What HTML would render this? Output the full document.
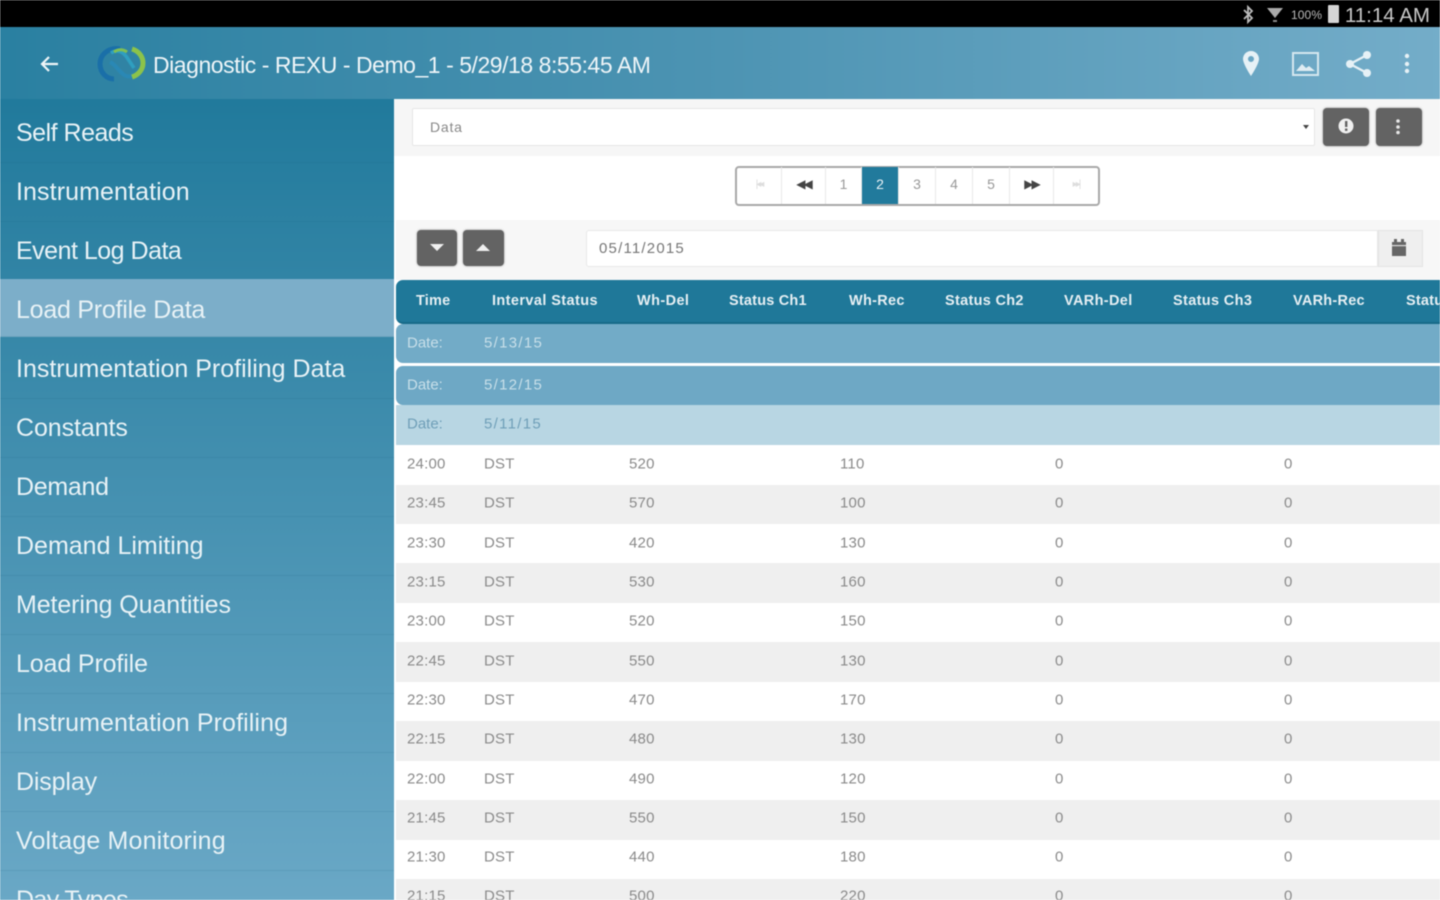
<!DOCTYPE html>
<html><head><meta charset="utf-8"><style>
*{box-sizing:border-box}
html,body{margin:0;padding:0;width:1440px;height:900px;overflow:hidden;background:#fff;font-family:"Liberation Sans",sans-serif}
#root{position:relative;width:1440px;height:900px;overflow:hidden;filter:blur(.5px)}
.a{position:absolute;white-space:nowrap}
#bar{left:0;top:0;width:1440px;height:27px;background:#000}
#hd{left:0;top:27px;width:1440px;height:72px;background:linear-gradient(90deg,#2a80a1,#4d94b3 50%,#74adc9);box-shadow:0 1px 2px rgba(0,0,0,.25)}
#side{left:0;top:99px;width:394px;height:801px;background:linear-gradient(180deg,#217a9c,#6aa8c6)}
.m{left:0;width:394px;height:59px;line-height:59px;padding-left:16px;color:#e8f2f6;font-size:25px;border-bottom:1px solid rgba(20,90,120,.13)}
.m.s{background:#7caec9;color:#e8f2f6}
.t{font-size:15px;color:#8a8a8a;letter-spacing:.2px;transform:translateY(-50%)}
.th{top:301px;transform:translateY(-50%);font-size:14.5px;font-weight:bold;color:#e6eff3;letter-spacing:.2px}
.pg{top:167px;height:37px;width:37px;text-align:center;line-height:35px;font-size:14px;color:#999;border-right:1px solid #e8e8e8}
.ic{font-size:10px;letter-spacing:-2px}
.btn{background:#636363;border-radius:4px;box-shadow:0 0 2px rgba(0,0,0,.4)}
.d{font-size:15px;transform:translateY(-50%)}
.v{letter-spacing:1.3px}
</style></head><body><div id="root">
<div class="a" id="bar"></div>
<div class="a" style="right:10px;top:4px;font-size:20.5px;color:#c8c8c8">11:14 AM</div>
<div class="a" style="left:1291px;top:8px;font-size:12px;letter-spacing:.1px;color:#bbb">100%</div>
<div class="a" style="left:1328px;top:5px;width:11px;height:18px;background:#d5d5d5;border-radius:1px"></div>
<svg class="a" style="left:1240px;top:5px" width="50" height="19" viewBox="0 0 50 19"><path d="M4 5l8 8-4 4V2l4 4-8 8" fill="none" stroke="#bbb" stroke-width="1.8"/><path d="M27 3h16l-8 10z" fill="#aaa"/><path d="M33 15h4v2h-4z" fill="#888"/></svg>

<div class="a" id="hd"></div>
<svg class="a" style="left:38px;top:52px" width="24" height="24" viewBox="0 0 24 24"><path d="M20 12H4M11 5l-7 7 7 7" fill="none" stroke="#eef5f8" stroke-width="2.2"/></svg>
<svg class="a" style="left:96px;top:44px" width="52" height="40" viewBox="0 0 52 40"><path d="M24 5C12 3 4 11 4 20c0 9 7 15 14 15" fill="none" stroke="#1a6fa8" stroke-width="5"/><path d="M15 9c6-4 12-2 17 6l6 9" fill="none" stroke="#2f9fc0" stroke-width="3.5"/><path d="M14 18c5 2 8 8 13 12 3 3 8 3 11 1" fill="none" stroke="#2a88b5" stroke-width="4"/><path d="M36 5c7 2 11 8 11 14 0 7-5 12-11 14" fill="none" stroke="#8cc34a" stroke-width="5"/><path d="M18 8c4-3 9-3 13 0" fill="none" stroke="#7fbf55" stroke-width="3"/></svg>
<div class="a" id="title" style="left:153px;top:51px;font-size:23px;line-height:28px;color:#eef5f8;letter-spacing:-.46px">Diagnostic - REXU - Demo_1 - 5/29/18 8:55:45 AM</div>
<svg class="a" style="left:1240px;top:50px" width="180" height="30" viewBox="0 0 180 30"><path fill-rule="evenodd" d="M11 1c-5 0-8 4-8 8 0 5 8 17 8 17s8-12 8-17c0-4-3-8-8-8zm0 5a3 3 0 1 1 0 6 3 3 0 0 1 0-6z" fill="#e6f1f6"/><rect x="53" y="3" width="25" height="22" fill="none" stroke="#d5e7ef" stroke-width="2"/><path d="M56 21l6-7 4 4 3-2 6 5z" fill="#dfecf2"/><g fill="#e6f1f6"><circle cx="110" cy="14" r="4"/><circle cx="127" cy="5" r="4"/><circle cx="127" cy="23" r="4"/></g><path d="M110 14l17-9M110 14l17 9" stroke="#e6f1f6" stroke-width="2.4"/><g fill="#e6f1f6"><circle cx="167" cy="6" r="2.2"/><circle cx="167" cy="14" r="2.2"/><circle cx="167" cy="21" r="2.2"/></g></svg>

<div class="a" id="side"></div>
<div class="a m" style="top:103.5px;letter-spacing:-.5px">Self Reads</div>
<div class="a m" style="top:162.5px;letter-spacing:.1px">Instrumentation</div>
<div class="a m" style="top:221.5px;letter-spacing:-.5px">Event Log Data</div>
<div class="a m s" style="top:279px;height:58px;line-height:62px;letter-spacing:-.24px">Load Profile Data</div>
<div class="a m" style="top:339.5px;letter-spacing:0">Instrumentation Profiling Data</div>
<div class="a m" style="top:398.5px;letter-spacing:-.08px">Constants</div>
<div class="a m" style="top:457.5px;letter-spacing:-.3px">Demand</div>
<div class="a m" style="top:516.5px;letter-spacing:0">Demand Limiting</div>
<div class="a m" style="top:575.5px;letter-spacing:-.1px">Metering Quantities</div>
<div class="a m" style="top:634.5px;letter-spacing:-.13px">Load Profile</div>
<div class="a m" style="top:693.5px;letter-spacing:.1px">Instrumentation Profiling</div>
<div class="a m" style="top:752.5px;letter-spacing:-.15px">Display</div>
<div class="a m" style="top:811.5px;letter-spacing:.15px">Voltage Monitoring</div>
<div class="a m" style="top:870.5px;letter-spacing:-.63px">Day Types</div>

<div class="a" style="left:394px;top:99px;width:1046px;height:57px;background:#f6f6f6"></div>
<div class="a" style="left:412px;top:108px;width:903px;height:38px;background:#fff;border:1px solid #e6e6e6;border-radius:2px"></div>
<div class="a" style="left:430px;top:119px;font-size:14px;color:#888;letter-spacing:.8px">Data</div>
<div class="a" style="left:1303px;top:125px;border:3px solid transparent;border-top:4px solid #444"></div>
<div class="a btn" style="left:1323px;top:108px;width:46px;height:38px"></div>
<svg class="a" style="left:1337px;top:117px" width="18" height="18" viewBox="0 0 18 18"><circle cx="9" cy="9" r="7.5" fill="#f0f0f0"/><rect x="8" y="4" width="2.4" height="6" fill="#636363"/><rect x="8" y="11.5" width="2.4" height="2.4" fill="#636363"/></svg>
<div class="a btn" style="left:1376px;top:108px;width:46px;height:38px"></div>
<svg class="a" style="left:1395px;top:118px" width="6" height="18" viewBox="0 0 6 18"><g fill="#e8e8e8"><circle cx="3" cy="3" r="1.8"/><circle cx="3" cy="9" r="1.8"/><circle cx="3" cy="14.5" r="1.8"/></g></svg>

<div class="a" style="left:735px;top:166px;width:365px;height:40px;background:#fff;border:2px solid #a8a8a8;border-radius:4px"></div>
<div class="a pg ic" style="left:737px;width:45px;color:#ddd">|◂◂</div>
<div class="a pg ic" style="left:782px;width:44px;color:#444;font-size:12px">◀◀</div>
<div class="a pg" style="left:826px;width:36px">1</div>
<div class="a pg" style="left:862px;background:#217a9c;color:#e8f2f6;height:37px">2</div>
<div class="a pg" style="left:899px;width:37px">3</div>
<div class="a pg" style="left:936px">4</div>
<div class="a pg" style="left:973px">5</div>
<div class="a pg ic" style="left:1010px;width:44px;color:#444;font-size:12px">▶▶</div>
<div class="a pg ic" style="left:1054px;width:44px;color:#ddd;border:0">▸▸|</div>

<div class="a" style="left:396px;top:220px;width:1044px;height:60px;background:#f7f7f7"></div>
<div class="a btn" style="left:417px;top:230px;width:40px;height:36px"></div>
<div class="a" style="left:430px;top:244px;border:7px solid transparent;border-top:7px solid #f0f0f0;border-bottom:0"></div>
<div class="a btn" style="left:463px;top:230px;width:41px;height:36px"></div>
<div class="a" style="left:476px;top:244px;border:7px solid transparent;border-bottom:7px solid #f0f0f0;border-top:0"></div>
<div class="a" style="left:586px;top:230px;width:792px;height:37px;background:#fff;border:1px solid #e8e8e8;border-radius:3px 0 0 3px"></div>
<div class="a" style="left:599px;top:240px;font-size:15px;color:#777;letter-spacing:1.2px">05/11/2015</div>
<div class="a" style="left:1378px;top:230px;width:45px;height:37px;background:#efefef;border:1px solid #e4e4e4"></div>
<svg class="a" style="left:1391px;top:239px" width="16" height="18" viewBox="0 0 16 18"><rect x="1" y="3" width="14" height="14" fill="#666"/><rect x="3" y="0" width="3" height="4" fill="#666"/><rect x="10" y="0" width="3" height="4" fill="#666"/><rect x="1" y="6" width="14" height="1.2" fill="#ddd"/></svg>

<div class="a" style="left:396px;top:280px;width:1044px;height:44px;background:#1f7899;border-radius:7px 0 0 7px;border-bottom:2px solid #176a89"></div>
<div class="a th" style="left:416px">Time</div>
<div class="a th" style="left:492px;letter-spacing:.4px">Interval Status</div>
<div class="a th" style="left:637px;letter-spacing:.4px">Wh-Del</div>
<div class="a th" style="left:729px">Status Ch1</div>
<div class="a th" style="left:849px;letter-spacing:.3px">Wh-Rec</div>
<div class="a th" style="left:945px;letter-spacing:.3px">Status Ch2</div>
<div class="a th" style="left:1064px;letter-spacing:.35px">VARh-Del</div>
<div class="a th" style="left:1173px;letter-spacing:.35px">Status Ch3</div>
<div class="a th" style="left:1293px;letter-spacing:.25px">VARh-Rec</div>
<div class="a th" style="left:1406px">Status</div>

<div class="a" style="left:396px;top:324px;width:1044px;height:39px;background:#72abc7;border-radius:7px 0 0 7px"></div>
<div class="a d" style="left:407px;top:343px;color:#c8dfe9">Date:</div>
<div class="a d v" style="left:484px;top:343px;color:#c8dfe9">5/13/15</div>
<div class="a" style="left:396px;top:366px;width:1044px;height:39px;background:#6ea8c5;border-radius:7px 0 0 7px"></div>
<div class="a d" style="left:407px;top:385px;color:#c8dfe9">Date:</div>
<div class="a d v" style="left:484px;top:385px;color:#c8dfe9">5/12/15</div>
<div class="a" style="left:396px;top:405px;width:1044px;height:40px;background:#b8d6e3"></div>
<div class="a d" style="left:407px;top:424px;color:#6f9fb8">Date:</div>
<div class="a d v" style="left:484px;top:424px;color:#6f9fb8">5/11/15</div>

<div class="a" style="left:396px;top:484.5px;width:1044px;height:39.5px;background:#efefef"></div>
<div class="a" style="left:396px;top:563px;width:1044px;height:39.5px;background:#efefef"></div>
<div class="a" style="left:396px;top:642px;width:1044px;height:39.5px;background:#efefef"></div>
<div class="a" style="left:396px;top:721px;width:1044px;height:39.5px;background:#efefef"></div>
<div class="a" style="left:396px;top:800px;width:1044px;height:39.5px;background:#efefef"></div>
<div class="a" style="left:396px;top:878.5px;width:1044px;height:21.5px;background:#efefef"></div>

<div class="a t" style="left:407px;top:463.5px">24:00</div><div class="a t" style="left:484px;top:463.5px">DST</div><div class="a t" style="left:629px;top:463.5px">520</div><div class="a t" style="left:840px;top:463.5px">110</div><div class="a t" style="left:1055px;top:463.5px">0</div><div class="a t" style="left:1284px;top:463.5px">0</div>
<div class="a t" style="left:407px;top:503px">23:45</div><div class="a t" style="left:484px;top:503px">DST</div><div class="a t" style="left:629px;top:503px">570</div><div class="a t" style="left:840px;top:503px">100</div><div class="a t" style="left:1055px;top:503px">0</div><div class="a t" style="left:1284px;top:503px">0</div>
<div class="a t" style="left:407px;top:542.5px">23:30</div><div class="a t" style="left:484px;top:542.5px">DST</div><div class="a t" style="left:629px;top:542.5px">420</div><div class="a t" style="left:840px;top:542.5px">130</div><div class="a t" style="left:1055px;top:542.5px">0</div><div class="a t" style="left:1284px;top:542.5px">0</div>
<div class="a t" style="left:407px;top:581.5px">23:15</div><div class="a t" style="left:484px;top:581.5px">DST</div><div class="a t" style="left:629px;top:581.5px">530</div><div class="a t" style="left:840px;top:581.5px">160</div><div class="a t" style="left:1055px;top:581.5px">0</div><div class="a t" style="left:1284px;top:581.5px">0</div>
<div class="a t" style="left:407px;top:621px">23:00</div><div class="a t" style="left:484px;top:621px">DST</div><div class="a t" style="left:629px;top:621px">520</div><div class="a t" style="left:840px;top:621px">150</div><div class="a t" style="left:1055px;top:621px">0</div><div class="a t" style="left:1284px;top:621px">0</div>
<div class="a t" style="left:407px;top:660.5px">22:45</div><div class="a t" style="left:484px;top:660.5px">DST</div><div class="a t" style="left:629px;top:660.5px">550</div><div class="a t" style="left:840px;top:660.5px">130</div><div class="a t" style="left:1055px;top:660.5px">0</div><div class="a t" style="left:1284px;top:660.5px">0</div>
<div class="a t" style="left:407px;top:699.5px">22:30</div><div class="a t" style="left:484px;top:699.5px">DST</div><div class="a t" style="left:629px;top:699.5px">470</div><div class="a t" style="left:840px;top:699.5px">170</div><div class="a t" style="left:1055px;top:699.5px">0</div><div class="a t" style="left:1284px;top:699.5px">0</div>
<div class="a t" style="left:407px;top:739px">22:15</div><div class="a t" style="left:484px;top:739px">DST</div><div class="a t" style="left:629px;top:739px">480</div><div class="a t" style="left:840px;top:739px">130</div><div class="a t" style="left:1055px;top:739px">0</div><div class="a t" style="left:1284px;top:739px">0</div>
<div class="a t" style="left:407px;top:778.5px">22:00</div><div class="a t" style="left:484px;top:778.5px">DST</div><div class="a t" style="left:629px;top:778.5px">490</div><div class="a t" style="left:840px;top:778.5px">120</div><div class="a t" style="left:1055px;top:778.5px">0</div><div class="a t" style="left:1284px;top:778.5px">0</div>
<div class="a t" style="left:407px;top:817.5px">21:45</div><div class="a t" style="left:484px;top:817.5px">DST</div><div class="a t" style="left:629px;top:817.5px">550</div><div class="a t" style="left:840px;top:817.5px">150</div><div class="a t" style="left:1055px;top:817.5px">0</div><div class="a t" style="left:1284px;top:817.5px">0</div>
<div class="a t" style="left:407px;top:857px">21:30</div><div class="a t" style="left:484px;top:857px">DST</div><div class="a t" style="left:629px;top:857px">440</div><div class="a t" style="left:840px;top:857px">180</div><div class="a t" style="left:1055px;top:857px">0</div><div class="a t" style="left:1284px;top:857px">0</div>
<div class="a t" style="left:407px;top:896px">21:15</div><div class="a t" style="left:484px;top:896px">DST</div><div class="a t" style="left:629px;top:896px">500</div><div class="a t" style="left:840px;top:896px">220</div><div class="a t" style="left:1055px;top:896px">0</div><div class="a t" style="left:1284px;top:896px">0</div>
</div></body></html>
